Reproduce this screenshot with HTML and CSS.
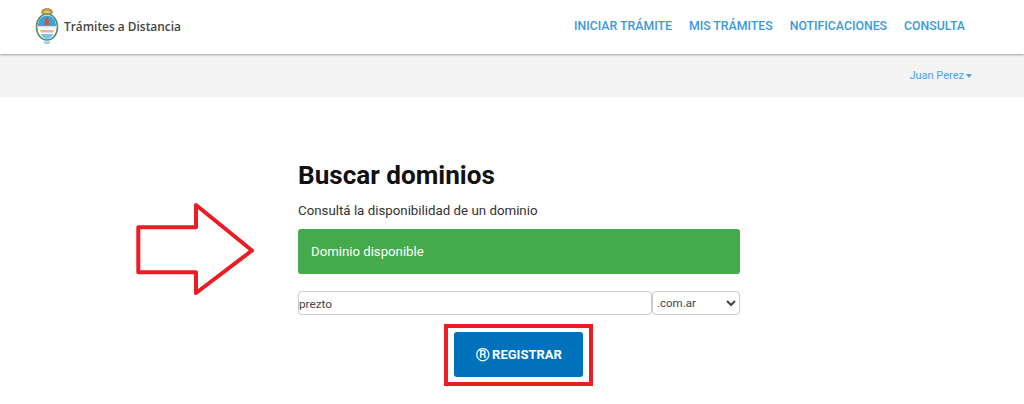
FILE: index.html

```html
<!DOCTYPE html>
<html lang="es">
<head>
    <meta charset="UTF-8">
    <title>Buscar dominios</title>
    <link rel="stylesheet" href="styles.css">
</head>
<body>

    <header class="topbar">
        <a class="brand" href="#">
            <svg class="brand-logo" width="24" height="38" viewBox="0 0 24 38">
                <!-- sun and cap -->
                <ellipse cx="12" cy="5" rx="6" ry="4" fill="#b59a52"/>
                <ellipse cx="12" cy="5" rx="3" ry="1.5" fill="#e8c95a"/>
                <!-- shield -->
                <ellipse cx="12" cy="20" rx="10.5" ry="13" fill="#fff" stroke="#5f8a6c" stroke-width="1.6"/>
                <path d="M3 19C3 12 7 8.5 12 8.5S21 12 21 19Z" fill="#37a6dc"/>
                <path d="M12 10c2 1 2.6 4 2.6 8h-5.2c0-4 .6-7 2.6-8Z" fill="#c8593f"/>
                <path d="M3 19h18v1.500H3Z" fill="#efe3cf"/>
                <path d="M5 23h14l-1 2.500H6Z" fill="#d9b9a0"/>
                <path d="M5.500 27h13c-1.500 3-4 5-6.500 5s-5-2-6.500-5Z" fill="#7cc4e6"/>
                <path d="M8 34.500h8l-2 2.500h-4Z" fill="#8fd0ec"/>
            </svg>
            <span class="brand-name">Trámites a Distancia</span>
        </a>
        <nav class="main-nav">
            <a href="#">INICIAR TRÁMITE</a>
            <a href="#">MIS TRÁMITES</a>
            <a href="#">NOTIFICACIONES</a>
            <a href="#">CONSULTA</a>
        </nav>
    </header>

    <div class="userbar">
        <a class="user-link" href="#">Juan Perez<span class="caret"></span></a>
    </div>

    <main class="content">
        <h1 class="title">Buscar dominios</h1>
        <p class="subtitle">Consultá la disponibilidad de un dominio</p>
        <div class="alert-ok">Dominio disponible</div>
        <form class="domain-form">
            <input class="domain-input" type="text" value="prezto">
            <select class="domain-select">
                <option>.com.ar</option>
            </select>
        </form>
        <div class="register-row">
            <div class="red-box">
                <button type="button" class="btn-register"><span class="reg-mark">®</span> REGISTRAR</button>
            </div>
        </div>
    </main>

    <!-- annotation arrow over the page -->
    <svg class="red-arrow" width="124" height="96" viewBox="0 0 124 96">
        <path d="M4.300 26.300H62V4L118 49.500 62 92V71.300H4.300Z" fill="none" stroke="#ed1c24" stroke-width="4" stroke-linejoin="round"/>
    </svg>

</body>
</html>
```

FILE: styles.css

```css
body {
    font-family: 'Roboto', 'Liberation Sans', sans-serif;
    margin: 0;
    padding: 0;
    height: 404px;
    overflow: hidden;
    background-color: #fff;
    position: relative;
}

a {
    text-decoration: none;
}

.topbar {
    height: 54px;
    box-sizing: border-box;
    display: flex;
    align-items: center;
    justify-content: space-between;
    padding: 0 59px 2px 35px;
    background-color: #fff;
    box-shadow: 0 1px 2px rgba(0, 0, 0, 0.35);
    position: relative;
}

.brand {
    display: flex;
    align-items: center;
    gap: 5px;
}

.brand-name {
    font-family: 'Open Sans', sans-serif;
    font-size: 11.900px;
    font-weight: 600;
    color: #444;
}

.main-nav {
    display: flex;
    gap: 17px;
}

.main-nav a {
    font-size: 12.300px;
    font-weight: 500;
    color: #3a9ad9;
}

.userbar {
    height: 43px;
    box-sizing: border-box;
    display: flex;
    justify-content: flex-end;
    align-items: center;
    padding-right: 52px;
    background-color: #f4f4f4;
}

.user-link {
    font-size: 11px;
    color: #4aa3f0;
}

.caret {
    display: inline-block;
    margin-left: 2px;
    vertical-align: middle;
    border-top: 4px solid #4aa3f0;
    border-left: 3.500px solid transparent;
    border-right: 3.500px solid transparent;
}

.content {
    width: 442px;
    margin-left: 298px;
    padding-top: 62px;
}

.title {
    font-size: 26.100px;
    font-weight: 700;
    line-height: 32px;
    margin: 0 0 12px 0;
    color: #111;
}

.subtitle {
    font-size: 13.300px;
    line-height: 16px;
    margin: 0 0 10px 0;
    color: #333;
}

.alert-ok {
    height: 45px;
    box-sizing: border-box;
    display: flex;
    align-items: center;
    padding-left: 13px;
    border-radius: 3px;
    background-color: #44aa4c;
    color: #fff;
    font-size: 13.200px;
}

.domain-form {
    display: flex;
    margin-top: 17px;
}

.domain-input {
    flex: 1;
    min-width: 0;
    height: 24px;
    box-sizing: border-box;
    padding: 1px 0 0;
    border: 1px solid #ccc;
    border-radius: 4px;
    font-family: inherit;
    font-size: 11.800px;
    color: #444;
}

.domain-select {
    width: 88px;
    height: 24px;
    box-sizing: border-box;
    padding-left: 0;
    border: 1px solid #ccc;
    border-radius: 4px;
    background-color: #fff;
    font-family: inherit;
    font-size: 11.500px;
    color: #444;
}

.register-row {
    display: flex;
    justify-content: center;
    margin-top: 9px;
    padding-right: 1px;
}

.red-box {
    border: 4px solid #ed1c24;
    padding: 4px 6px 5px;
}

.btn-register {
    display: flex;
    align-items: center;
    justify-content: center;
    gap: 2px;
    width: 129px;
    height: 45px;
    border: none;
    border-radius: 3px;
    background-color: #0072bb;
    color: #fff;
    font-family: inherit;
    font-size: 13px;
    font-weight: 700;
}

.reg-mark {
    font-size: 19px;
    font-weight: 500;
    line-height: 1;
}

.red-arrow {
    position: absolute;
    left: 134px;
    top: 201px;
}
```
